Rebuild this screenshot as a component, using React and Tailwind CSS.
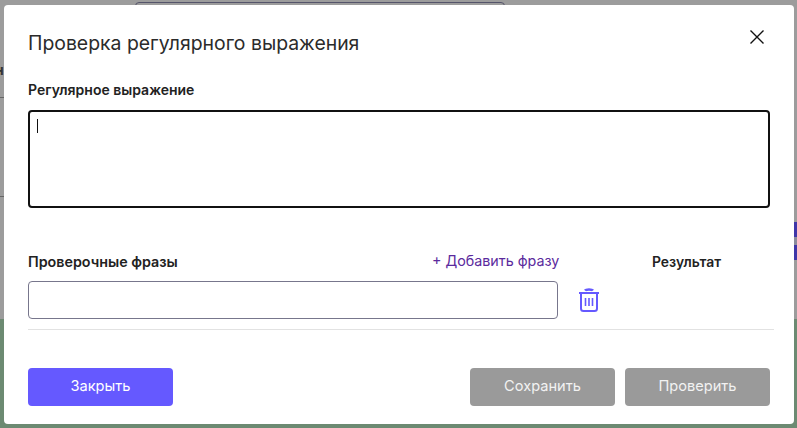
const F = { fontFamily: '"Inter", "Noto Sans", sans-serif' };

export default function App() {
  return (
    <div className="relative h-[428px] w-[797px] overflow-hidden bg-[#9c9c9c]" style={F}>
      {/* dimmed page behind */}
      <div className="absolute left-[135px] top-[2px] h-6 w-[370px] rounded border border-[#55546a]" />
      <div className="absolute left-0 top-[60px] text-sm font-bold leading-5 text-[#333] -ml-[5px]">н</div>
      <div className="absolute left-0 top-[97px] h-px w-[4px] bg-[#666]" />
      <div className="absolute left-0 top-[196px] h-px w-[4px] bg-[#666]" />
      <div className="absolute right-0 top-[222px] h-[38px] w-[3px] bg-[#3f36a8]" />
      <div className="absolute right-0 top-[237px] h-[8px] w-[3px] bg-[#8b8b9c]" />
      <div className="absolute bottom-0 left-0 h-[109px] w-full bg-[#6c8a72]" />

      {/* dialog */}
      <div className="absolute left-[4px] top-[5px] flex h-[419px] w-[790px] flex-col rounded bg-white px-6">
        <div className="flex items-start justify-between pt-[26px]">
          <h2 className="text-[19.4px] leading-6 text-[#2b2b2b]">Проверка регулярного выражения</h2>
          <svg width="16" height="16" viewBox="0 0 16 16" className="mr-[5px] mt-[-2px]" fill="none" stroke="#111" strokeWidth="1.4">
            <path d="M1.5 1.5 14.5 14.5M14.5 1.5 1.5 14.5" />
          </svg>
        </div>

        <label className="mt-[25px] text-[14px] font-semibold leading-5 text-[#222]">Регулярное выражение</label>
        <div className="mt-[10px] h-[98px] w-[742px] rounded border-2 border-[#111] p-[7px]">
          <div className="h-[14px] w-px bg-[#111]" />
        </div>

        <div className="mt-[44px] flex items-center text-[14.3px] leading-5">
          <span className="w-[404px] font-semibold text-[#222]">Проверочные фразы</span>
          <span className="w-[220px] -translate-y-px text-[#5b2a9d]">+ Добавить фразу</span>
          <span className="text-[13.9px] font-semibold text-[#222]">Результат</span>
        </div>

        <div className="mt-[9px] flex items-center">
          <div className="h-[38px] w-[530px] rounded border border-[#77768c]" />
          <svg width="24" height="26" viewBox="0 0 24 26" className="ml-[19px]" fill="none" stroke="#6559ff" strokeWidth="2">
            <path d="M2 6h20" />
            <path d="M8 3.500c1-1.500 7-1.500 8 0" strokeWidth="2.500" />
            <path d="M4 6v15.500a2.500 2.500 0 0 0 2.500 2.500h11a2.500 2.500 0 0 0 2.500-2.500V6" />
            <path d="M8.500 11v8M12 11v8M15.500 11v8" strokeWidth="1.600" />
          </svg>
        </div>
        <div className="mt-[10px] h-px w-[746px] bg-[#e2e2e2]" />

        <div className="mt-[38px] flex w-[742px] text-[14.6px]">
          <button className="h-[38px] w-[145px] rounded bg-[#6559ff] text-white">Закрыть</button>
          <button className="ml-auto h-[38px] w-[145px] rounded bg-[#9a9a9a] text-[#f2f2f2]">Сохранить</button>
          <button className="ml-[10px] h-[38px] w-[145px] rounded bg-[#9a9a9a] text-[#f2f2f2]">Проверить</button>
        </div>
      </div>
    </div>
  );
}
